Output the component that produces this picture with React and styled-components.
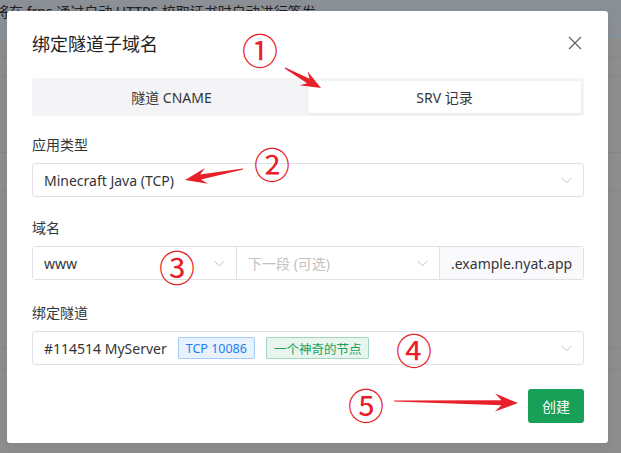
import React from 'react'
import styled, { createGlobalStyle } from 'styled-components'

const Global = createGlobalStyle`
  html, body { margin: 0; padding: 0; }
  body {
    width: 621px;
    height: 453px;
    overflow: hidden;
    background: #8e8e8e;
    font-family: "Noto Sans", "Noto Sans CJK SC", sans-serif;
    color: #333639;
  }
`

const Page = styled.div`
  position: relative;
  width: 621px;
  height: 453px;
  overflow: hidden;
`

// dimmed page behind the dialog
const Backdrop = styled.div`
  display: flex;
  flex-direction: column;
  height: 100%;
`
const Notice = styled.div`
  height: 36px;
  background: #8b9096;
  border-bottom: 1px solid #7d93ad;
  font-size: 14px;
  line-height: 24px;
  color: #1e2022;
  margin-left: -5px;
  white-space: nowrap;
`
const BgRow = styled.div`
  height: ${p => p.$h}px;
  border-bottom: 1px solid #868686;
  flex: none;
`

const Modal = styled.div`
  position: absolute;
  left: 7px;
  top: 11px;
  width: 601px;
  box-sizing: border-box;
  background: #fff;
  border-radius: 3px;
  padding: 20px 24px 20px 25px;
  box-shadow: 0 3px 12px rgba(0, 0, 0, 0.08);
`
const Header = styled.div`
  display: flex;
  align-items: center;
  justify-content: space-between;
  height: 24px;
`
const Title = styled.div`
  font-family: "Noto Sans CJK SC", sans-serif;
  font-size: 18px;
  color: #1f2225;
`
const Close = styled.button`
  border: 0;
  background: none;
  padding: 0;
  width: 16px;
  height: 16px;
  margin-right: 1px;
  display: flex;
  align-items: center;
  justify-content: center;
`

const Tabs = styled.div`
  margin-top: 23px;
  display: grid;
  grid-template-columns: 1fr 1fr;
  padding: 3px;
  background: #f4f4f7;
  border-radius: 3px;
`
const Tab = styled.div`
  height: 32px;
  display: flex;
  align-items: center;
  justify-content: center;
  font-size: 14px;
  color: #333639;
  border-radius: 3px;
  background: ${p => (p.$active ? '#fff' : 'transparent')};
  box-shadow: ${p => (p.$active ? '0 1px 3px rgba(0,0,0,0.06)' : 'none')};
`

const Field = styled.div`
  margin-top: ${p => p.$top}px;
`
const Label = styled.div`
  font-size: 14px;
  line-height: 20px;
  margin-bottom: 8px;
  color: #333639;
`
const Select = styled.div`
  height: 34px;
  box-sizing: border-box;
  border: 1px solid #e0e0e6;
  border-radius: 3px;
  display: flex;
  align-items: center;
  padding: 0 11px;
  font-size: 14px;
`
const Value = styled.div`
  flex: 1;
  display: flex;
  align-items: center;
  gap: 11px;
  color: ${p => (p.$placeholder ? '#c2c2c2' : '#333639')};
  white-space: nowrap;
`
const Group = styled.div`
  display: grid;
  grid-template-columns: 203px 203px 1fr;
  height: 34px;
  box-sizing: border-box;
  border: 1px solid #e0e0e6;
  border-radius: 3px;
  font-size: 14px;
`
const Segment = styled.div`
  display: flex;
  align-items: center;
  padding: 0 11px;
  border-left: ${p => (p.$first ? '0' : '1px solid #e0e0e6')};
  background: ${p => (p.$addon ? '#fafafc' : '#fff')};
  justify-content: ${p => (p.$addon ? 'center' : 'flex-start')};
  color: #333639;
`
const Tag = styled.span`
  display: inline-flex;
  align-items: center;
  height: 20px;
  padding: 0 7px;
  font-size: 12.5px;
  border-radius: 2px;
  border: 1px solid ${p => (p.$kind === 'info' ? 'rgba(32,128,240,0.35)' : 'rgba(24,160,88,0.35)')};
  background: ${p => (p.$kind === 'info' ? 'rgba(32,128,240,0.1)' : 'rgba(24,160,88,0.1)')};
  color: ${p => (p.$kind === 'info' ? '#2080f0' : '#18a058')};
`

const Footer = styled.div`
  display: flex;
  justify-content: flex-end;
  margin-top: 24px;
`
const Button = styled.button`
  width: 56px;
  height: 34px;
  border: 0;
  border-radius: 3px;
  background: #18a058;
  color: #fff;
  font-family: "Noto Sans CJK SC", sans-serif;
  font-size: 14px;
`

// red annotations drawn over the screenshot
const Marks = styled.div`
  position: absolute;
  inset: 0;
  pointer-events: none;
`
const Num = styled.span`
  position: absolute;
  left: ${p => p.$x}px;
  top: ${p => p.$y}px;
  transform: translate(-50%, -50%);
  font-family: "Noto Sans CJK SC", sans-serif;
  font-size: 36px;
  font-weight: 400;
  line-height: 1;
  color: #e8202a;
`
const ArrowLayer = styled.svg`
  position: absolute;
  left: 0;
  top: 0;
`

const Chevron = () => (
  <svg width="11" height="7" viewBox="0 0 11 7">
    <path d="M0.5 0.8 L5.5 5.8 L10.5 0.8" fill="none" stroke="#c2c2c2" strokeWidth="1" />
  </svg>
)

const arrowPoints = (x1, y1, x2, y2, head = 22, wing = 8, neck = 3) => {
  const len = Math.hypot(x2 - x1, y2 - y1)
  const ux = (x2 - x1) / len
  const uy = (y2 - y1) / len
  const nx = -uy
  const ny = ux
  const nkx = x2 - ux * head * 0.72
  const nky = y2 - uy * head * 0.72
  const bx = x2 - ux * head
  const by = y2 - uy * head
  const pts = [
    [x1 + nx * 0.6, y1 + ny * 0.6],
    [nkx + nx * neck, nky + ny * neck],
    [bx + nx * wing, by + ny * wing],
    [x2, y2],
    [bx - nx * wing, by - ny * wing],
    [nkx - nx * neck, nky - ny * neck],
    [x1 - nx * 0.6, y1 - ny * 0.6],
  ]
  return pts.map(p => p.map(v => v.toFixed(1)).join(',')).join(' ')
}

const arrows = [
  [285, 68, 321, 88, 20, 8, 2.5],
  [243, 169, 185, 180, 22, 8, 2.5],
  [394, 401, 518, 403, 23, 9, 2.5],
]

const App = () => (
  <Page>
    <Global />
    <Backdrop>
      <Notice>将在 frps 通过自动 HTTPS 校取证书时自动进行签发</Notice>
      <BgRow $h={20} />
      <BgRow $h={17} />
      <BgRow $h={76} />
      <BgRow $h={37} />
      <BgRow $h={157} />
      <BgRow $h={20} />
    </Backdrop>

    <Modal>
      <Header>
        <Title>绑定隧道子域名</Title>
        <Close aria-label="close">
          <svg width="14" height="14" viewBox="0 0 14 14">
            <path d="M1 1 L13 13 M13 1 L1 13" stroke="#666" strokeWidth="1.3" />
          </svg>
        </Close>
      </Header>

      <Tabs>
        <Tab>隧道 CNAME</Tab>
        <Tab $active>SRV 记录</Tab>
      </Tabs>

      <Field $top={19}>
        <Label>应用类型</Label>
        <Select>
          <Value>Minecraft Java (TCP)</Value>
          <Chevron />
        </Select>
      </Field>

      <Field $top={21}>
        <Label>域名</Label>
        <Group>
          <Segment $first>
            <Value>www</Value>
            <Chevron />
          </Segment>
          <Segment>
            <Value $placeholder>下一段 (可选)</Value>
            <Chevron />
          </Segment>
          <Segment $addon>.example.nyat.app</Segment>
        </Group>
      </Field>

      <Field $top={23}>
        <Label>绑定隧道</Label>
        <Select>
          <Value>
            #114514 MyServer
            <Tag $kind="info">TCP 10086</Tag>
            <Tag $kind="success">一个神奇的节点</Tag>
          </Value>
          <Chevron />
        </Select>
      </Field>

      <Footer>
        <Button>创建</Button>
      </Footer>
    </Modal>

    <Marks>
      <ArrowLayer width="621" height="453">
        {arrows.map((a, i) => (
          <polygon key={i} points={arrowPoints(...a)} fill="#e8202a" />
        ))}
      </ArrowLayer>
      <Num $x={260} $y={49}>①</Num>
      <Num $x={272} $y={163}>②</Num>
      <Num $x={177} $y={266}>③</Num>
      <Num $x={414} $y={349}>④</Num>
      <Num $x={366} $y={404}>⑤</Num>
    </Marks>
  </Page>
)

export default App
